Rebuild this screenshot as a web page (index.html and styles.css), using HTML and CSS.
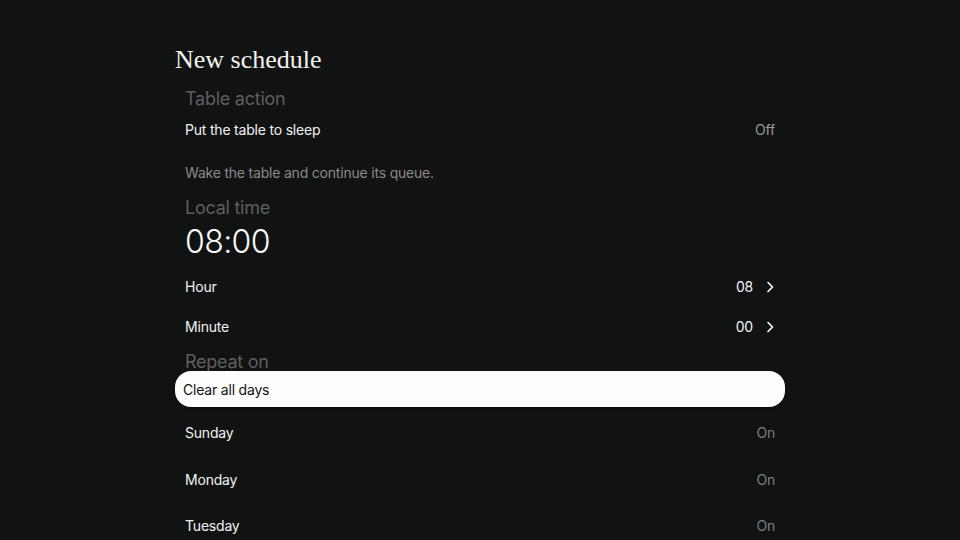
FILE: index.html
```html
<!DOCTYPE html>
<html lang="en">
<head>
<meta charset="utf-8">
<title>New schedule</title>
<link rel="stylesheet" href="styles.css">
</head>
<body>
<main class="panel">
  <h1 class="title">New schedule</h1>
  <h2 class="section section-action">Table action</h2>
  <div class="row row-action"><span class="label">Put the table to sleep</span><span class="value dim">Off</span></div>
  <p class="desc">Wake the table and continue its queue.</p>
  <h2 class="section section-time">Local time</h2>
  <div class="clock">08:00</div>
  <div class="row row-time row-hour"><span class="label">Hour</span><span class="value">08<svg class="chev" viewBox="0 0 10 14" width="10" height="14"><path d="M3 2.5 L7.5 7 L3 11.5" fill="none" stroke="#fff" stroke-width="1.6" stroke-linecap="round" stroke-linejoin="round"/></svg></span></div>
  <div class="row row-time"><span class="label">Minute</span><span class="value">00<svg class="chev" viewBox="0 0 10 14" width="10" height="14"><path d="M3 2.5 L7.5 7 L3 11.5" fill="none" stroke="#fff" stroke-width="1.6" stroke-linecap="round" stroke-linejoin="round"/></svg></span></div>
  <h2 class="section section-repeat">Repeat on</h2>
  <div class="pill">Clear all days</div>
  <div class="row row-day row-first-day"><span class="label">Sunday</span><span class="value dim2">On</span></div>
  <div class="row row-day"><span class="label">Monday</span><span class="value dim2">On</span></div>
  <div class="row row-day"><span class="label">Tuesday</span><span class="value dim2">On</span></div>
</main>
</body>
</html>
```
FILE: styles.css
```css
html, body {
  margin: 0;
  padding: 0;
  background: #111212;
  height: 100%;
  overflow: hidden;
}
body {
  font-family: Inter, "Noto Sans", sans-serif;
  color: #f2f2f2;
}
.panel {
  width: 610px;
  margin: 0 0 0 175px;
  padding-top: 44px;
  display: flex;
  flex-direction: column;
}
.title {
  font-family: "Liberation Serif", "DejaVu Serif", serif;
  font-weight: 400;
  font-size: 26px;
  line-height: 32px;
  margin: 0;
  color: #f4f2ee;
}
.section {
  font-size: 18px;
  font-weight: 400;
  line-height: 24px;
  letter-spacing: -0.25px;
  color: #5e5f5f;
  margin: 2px 0 0 10px;
}
.section-action { margin-top: 11px; }
.row {
  display: flex;
  justify-content: space-between;
  align-items: center;
  padding: 0 10px;
  font-size: 14px;
  line-height: 20px;
  letter-spacing: -0.2px;
}
.row-action { height: 30px; margin-top: 4px; }
.desc {
  margin: 18px 0 0 10px;
  font-size: 14px;
  line-height: 20px;
  letter-spacing: -0.2px;
  color: #8b8b8b;
}
.section-time { margin-top: 13px; }
.clock {
  margin: 2px 0 0 10px;
  font-size: 32px;
  font-weight: 300;
  line-height: 40px;
  letter-spacing: -0.6px;
  color: #fafafa;
}
.row-time { height: 40px; }
.row-hour { margin-top: 5px; }
.value {
  display: flex;
  align-items: center;
  gap: 12px;
}
.dim { color: #9a9a9a; }
.dim2 { color: #7e7e7e; }
.section-repeat { margin-top: 4px; line-height: 22px; }
.pill {
  margin-top: -2px;
  height: 36px;
  background: #fdfdfd;
  border-radius: 16px;
  color: #111;
  font-size: 14px;
  letter-spacing: -0.2px;
  display: flex;
  align-items: center;
  padding: 0 8px;
  box-shadow: 0 1px 2px rgba(0,0,0,0.4);
}
.row-day { height: 46.5px; }
.row-first-day { margin-top: 3px; }
```
